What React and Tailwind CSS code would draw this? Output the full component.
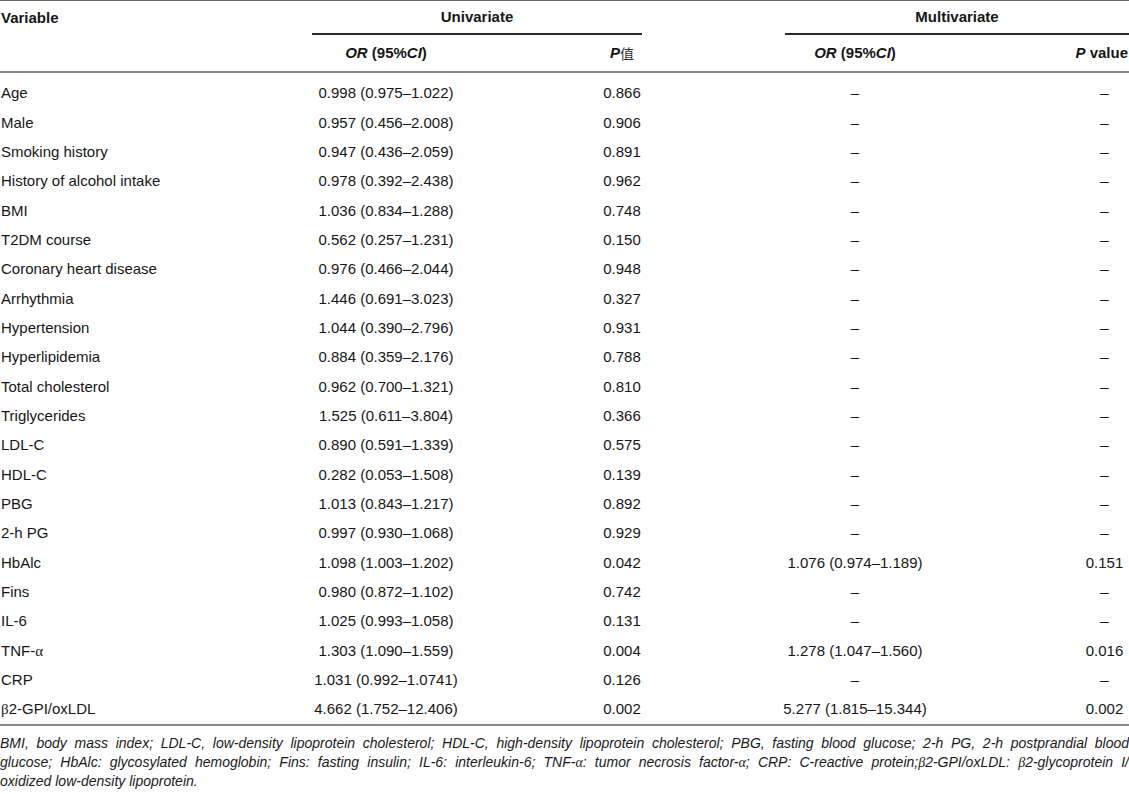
import React from "react";

const rows = [
  ["Age", "0.998 (0.975–1.022)", "0.866", "–", "–"],
  ["Male", "0.957 (0.456–2.008)", "0.906", "–", "–"],
  ["Smoking history", "0.947 (0.436–2.059)", "0.891", "–", "–"],
  ["History of alcohol intake", "0.978 (0.392–2.438)", "0.962", "–", "–"],
  ["BMI", "1.036 (0.834–1.288)", "0.748", "–", "–"],
  ["T2DM course", "0.562 (0.257–1.231)", "0.150", "–", "–"],
  ["Coronary heart disease", "0.976 (0.466–2.044)", "0.948", "–", "–"],
  ["Arrhythmia", "1.446 (0.691–3.023)", "0.327", "–", "–"],
  ["Hypertension", "1.044 (0.390–2.796)", "0.931", "–", "–"],
  ["Hyperlipidemia", "0.884 (0.359–2.176)", "0.788", "–", "–"],
  ["Total cholesterol", "0.962 (0.700–1.321)", "0.810", "–", "–"],
  ["Triglycerides", "1.525 (0.611–3.804)", "0.366", "–", "–"],
  ["LDL-C", "0.890 (0.591–1.339)", "0.575", "–", "–"],
  ["HDL-C", "0.282 (0.053–1.508)", "0.139", "–", "–"],
  ["PBG", "1.013 (0.843–1.217)", "0.892", "–", "–"],
  ["2-h PG", "0.997 (0.930–1.068)", "0.929", "–", "–"],
  ["HbAlc", "1.098 (1.003–1.202)", "0.042", "1.076 (0.974–1.189)", "0.151"],
  ["Fins", "0.980 (0.872–1.102)", "0.742", "–", "–"],
  ["IL-6", "1.025 (0.993–1.058)", "0.131", "–", "–"],
  ["TNF-α", "1.303 (1.090–1.559)", "0.004", "1.278 (1.047–1.560)", "0.016"],
  ["CRP", "1.031 (0.992–1.0741)", "0.126", "–", "–"],
  ["β2-GPI/oxLDL", "4.662 (1.752–12.406)", "0.002", "5.277 (1.815–15.344)", "0.002"],
];

const G = ({ children }) => (
  <span className="font-['Liberation_Serif',serif]">{children}</span>
);

function VarName({ name }) {
  if (name === "TNF-α")
    return (
      <>
        TNF-<G>α</G>
      </>
    );
  if (name === "β2-GPI/oxLDL")
    return (
      <>
        <G>β</G>2-GPI/oxLDL
      </>
    );
  return name;
}

const grid = "grid grid-cols-[312px_148px_324px_142px_154px_49px]";

function Cell({ children, className = "" }) {
  return (
    <div className={`flex items-center justify-center whitespace-nowrap ${className}`}>
      {children}
    </div>
  );
}

export default function App() {
  return (
    <div className="w-[1129px] h-[794px] overflow-hidden bg-white text-[#161616] font-['Liberation_Sans',Arial,sans-serif] text-[15px]">
      <div className="border-t border-[#666]">
        {/* header row 1 */}
        <div className="flex h-[34px] font-bold">
          <div className="w-[312px] flex items-center pl-[1px]">Variable</div>
          <div className="w-[330px] flex items-center justify-center border-b-2 border-[#2a2a2a]">
            Univariate
          </div>
          <div className="w-[143px]" />
          <div className="flex-1 flex items-center justify-center border-b-2 border-[#2a2a2a]">
            Multivariate
          </div>
        </div>
        {/* header row 2 */}
        <div className={`${grid} h-[38px] font-bold border-b-2 border-[#8a8a8a]`}>
          <div />
          <Cell>
            <i>OR</i>&nbsp;(95%<i>CI</i>)
          </Cell>
          <Cell>
            <i>P</i>
            <span className="font-normal font-['Noto_Sans_CJK_SC',sans-serif] text-[14px] text-[#333]">值</span>
          </Cell>
          <Cell>
            <i>OR</i>&nbsp;(95%<i>CI</i>)
          </Cell>
          <div />
          <div className="flex items-center justify-end whitespace-nowrap pr-[1px]">
            <i>P</i>&nbsp;value
          </div>
        </div>
        {/* body */}
        <div className="pt-[6px] border-b-2 border-[#8a8a8a]">
          {rows.map((r, i) => (
            <div key={i} className={`${grid} h-[29.33px]`}>
              <div className="flex items-center pl-[1px] whitespace-nowrap">
                <VarName name={r[0]} />
              </div>
              <Cell>{r[1]}</Cell>
              <Cell>{r[2]}</Cell>
              <Cell>{r[3]}</Cell>
              <div />
              <Cell>{r[4]}</Cell>
            </div>
          ))}
        </div>
        {/* footnote */}
        <div className="pt-[8px] italic text-[14px] leading-[19px] text-[#1a1a1a]">
          <div className="text-justify [text-align-last:justify] whitespace-nowrap">
            BMI, body mass index; LDL-C, low-density lipoprotein cholesterol; HDL-C, high-density lipoprotein cholesterol; PBG, fasting blood glucose; 2-h PG, 2-h postprandial blood
          </div>
          <div className="text-justify [text-align-last:justify] whitespace-nowrap">
            glucose; HbAlc: glycosylated hemoglobin; Fins: fasting insulin; IL-6: interleukin-6; TNF-<G>α</G>: tumor necrosis factor-<G>α</G>; CRP: C-reactive protein;<G>β</G>2-GPI/oxLDL: <G>β</G>2-glycoprotein I/
          </div>
          <div>oxidized low-density lipoprotein.</div>
        </div>
      </div>
    </div>
  );
}
